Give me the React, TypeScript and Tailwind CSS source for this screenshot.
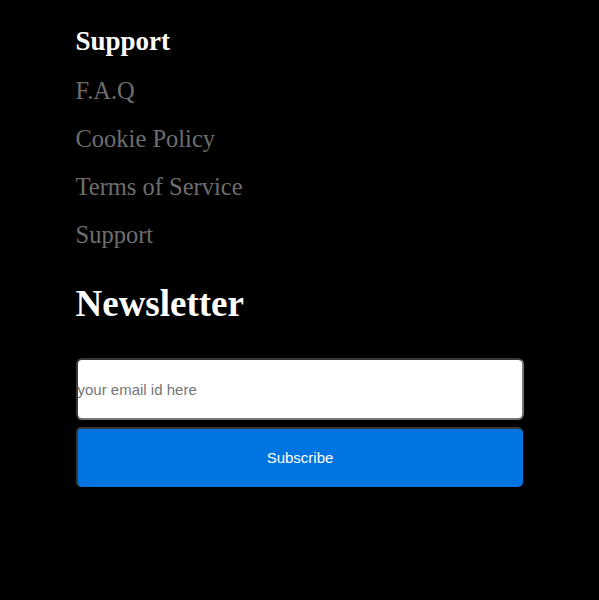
const links = ["F.A.Q", "Cookie Policy", "Terms of Service", "Support"];

export default function App() {
  return (
    <main className="min-h-screen w-full bg-black">
      <section className="mx-auto w-[448px] pt-[18px] font-['Liberation_Serif',serif]">
        {/* Support links */}
        <h3 className="h-12 text-[27px] leading-[46px] font-bold text-white">Support</h3>
        <ul className="flex flex-col pt-[1px]">
          {links.map((l) => (
            <li key={l} className="h-12 text-[24.5px] leading-[48px] text-[#6e6e6e]">
              {l}
            </li>
          ))}
        </ul>

        {/* Newsletter */}
        <h2 className="mt-[23px] text-[37px] leading-[44px] font-bold text-white">Newsletter</h2>
        <form className="mt-[32px] flex flex-col gap-[7px] font-['Liberation_Sans',sans-serif]">
          <input
            type="email"
            placeholder="your email id here"
            className="h-[62px] w-full rounded-[6px] border-2 border-t-[#3a3a3a] border-l-[#3a3a3a] border-r-[#767676] border-b-[#767676] bg-white px-0 text-[15px] text-black placeholder:text-[#757575] outline-none"
          />
          <button
            type="button"
            className="h-[60px] w-[447px] rounded-[5px] border-t-2 border-l-2 border-[#3a3a3a] bg-[#0074e0] text-[15px] text-white"
          >
            Subscribe
          </button>
        </form>
      </section>
    </main>
  );
}
